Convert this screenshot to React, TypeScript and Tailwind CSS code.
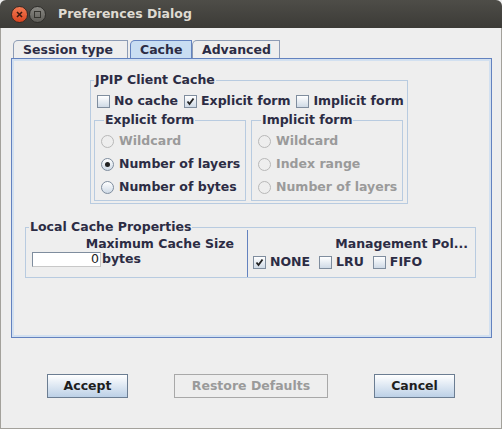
import React from 'react';

const TEXT = 'text-[#2c2c44]';
const DIM = 'text-[#9a9a9a]';

const CheckBox: React.FC<{ checked?: boolean; label: string; className?: string }> = ({ checked, label, className }) => (
  <div className={`flex items-center gap-[4px] ${className ?? ''}`}>
    <div className="w-[13px] h-[13px] border border-[#7f8d9e] bg-gradient-to-b from-[#ffffff] to-[#cfdae6] flex items-center justify-center">
      {checked && (
        <svg width="9" height="9" viewBox="0 0 9 9">
          <path d="M1.5 4.5 L3.5 7 L7.5 1.5" stroke="#222" strokeWidth="1.8" fill="none" />
        </svg>
      )}
    </div>
    <span className={TEXT}>{label}</span>
  </div>
);

const Radio: React.FC<{ checked?: boolean; disabled?: boolean; label: string }> = ({ checked, disabled, label }) => (
  <div className="flex items-center gap-[5px] h-[23px]">
    <div
      className={`w-[13px] h-[13px] rounded-full border flex items-center justify-center ${
        disabled ? 'border-[#b8b8b8] bg-[#eeeeee]' : 'border-[#7f8d9e] bg-gradient-to-b from-[#ffffff] to-[#cfdae6]'
      }`}
    >
      {checked && <div className="w-[5px] h-[5px] rounded-full bg-[#222]" />}
    </div>
    <span className={disabled ? DIM : TEXT}>{label}</span>
  </div>
);

const Group: React.FC<{ title: string; className?: string; children: React.ReactNode }> = ({ title, className, children }) => (
  <fieldset className={`border border-[#b8cbe0] ${className ?? ''}`}>
    <legend className={`ml-[3px] px-[1px] leading-[16px] ${TEXT}`}>{title}</legend>
    {children}
  </fieldset>
);

const Tab: React.FC<{ label: string; selected?: boolean; width: string }> = ({ label, selected, width }) => (
  <div
    className={`${width} h-[18px] rounded-tl-[5px] border border-b-0 flex items-center pl-[9px] pt-[1px] ${
      selected ? 'bg-[#c8ddf2] border-[#6382bf]' : 'bg-[#eeeeee] border-[#8d9cb5]'
    }`}
  >
    <span className={TEXT}>{label}</span>
  </div>
);

const Button: React.FC<{ label: string; width: string; disabled?: boolean }> = ({ label, width, disabled }) => (
  <div
    className={`${width} h-[24px] border flex items-center justify-center ${
      disabled
        ? 'border-[#a8a8a8] bg-[#eeeeee] text-[#9a9a9a]'
        : 'border-[#6b7d92] bg-gradient-to-b from-[#ffffff] to-[#bcd0e6] text-[#1e1e1e]'
    }`}
  >
    {label}
  </div>
);

export default function App() {
  return (
    <div
      className="w-[502px] h-[429px] flex flex-col bg-[#eeeeee] text-[12.5px] font-bold"
      style={{ fontFamily: '"DejaVu Sans", sans-serif' }}
    >
      {/* title bar */}
      <div className="h-[28px] rounded-t-[6px] bg-gradient-to-b from-[#4e4d48] to-[#3c3b37] flex items-center pl-[11px] shrink-0">
        <div className="w-[17px] h-[17px] rounded-full bg-gradient-to-b from-[#f37a52] to-[#d9431e] border border-[#3a2a24] flex items-center justify-center">
          <svg width="7" height="7" viewBox="0 0 7 7">
            <path d="M1 1 L6 6 M6 1 L1 6" stroke="#3b1a10" strokeWidth="1.6" />
          </svg>
        </div>
        <div className="ml-[1px] w-[17px] h-[17px] rounded-full bg-gradient-to-b from-[#8a8984] to-[#5f5e59] border border-[#2f2e2b] flex items-center justify-center">
          <div className="w-[7px] h-[7px] border-[1.5px] border-[#35342f]" />
        </div>
        <span className="ml-[12px] text-[#dfdbd2] text-[12.5px]">Preferences Dialog</span>
      </div>

      {/* body */}
      <div className="flex-1 flex flex-col border-x border-b border-[#a3a19b] pl-[10px] pr-[9px] pt-[12px]">
        {/* tabs */}
        <div className="flex items-end pl-[2px] gap-[2px]">
          <Tab label="Session type" width="w-[115px]" />
          <div className="flex">
            <Tab label="Cache" selected width="w-[62px]" />
            <Tab label="Advanced" width="w-[88px]" />
          </div>
        </div>

        {/* tab panel */}
        <div className="h-[280px] border border-[#6382bf]">
          <div className="h-full border-2 border-[#d2e0f0] flex flex-col">
            <Group title="JPIP Client Cache" className="ml-[76px] mt-[11px] w-[318px] pb-[2px]">
              <div className="flex items-center h-[22px] pl-[6px] mt-[2px]">
                <CheckBox label="No cache" />
                <CheckBox label="Explicit form" checked className="ml-[6px]" />
                <CheckBox label="Implicit form" className="ml-[6px]" />
              </div>
              <div className="flex pl-[3px] gap-[5px]">
                <Group title="Explicit form" className="w-[152px] pl-[6px] pt-[2px] pb-[1px]">
                  <Radio label="Wildcard" disabled />
                  <Radio label="Number of layers" checked />
                  <Radio label="Number of bytes" />
                </Group>
                <Group title="Implicit form" className="w-[152px] pl-[6px] pt-[2px] pb-[1px]">
                  <Radio label="Wildcard" disabled />
                  <Radio label="Index range" disabled />
                  <Radio label="Number of layers" disabled />
                </Group>
              </div>
            </Group>

            <Group title="Local Cache Properties" className="ml-[11px] mt-[15px] w-[451px]">
              <div className="flex h-[42px] pt-[1px]">
                <div className="w-[221px] flex flex-col">
                  <div className={`text-right pr-[13px] leading-[15px] ${TEXT}`}>Maximum Cache Size</div>
                  <div className="flex items-center mt-[-1px] pl-[6px]">
                    <div className="w-[69px] h-[15px] bg-white border border-[#7f8d9e] border-r-[#c8c8c8] border-b-[#c8c8c8] flex items-center justify-end pr-[1px] font-normal text-[#222] leading-none">
                      0
                    </div>
                    <span className={`ml-[1px] ${TEXT}`}>bytes</span>
                  </div>
                </div>
                <div className="w-[1px] bg-[#6382bf] mt-[-6px]" />
                <div className="flex-1 flex flex-col">
                  <div className={`text-right pr-[7px] leading-[15px] ${TEXT}`}>Management Pol...</div>
                  <div className="flex items-center mt-[2px] pl-[5px]">
                    <CheckBox label="NONE" checked />
                    <CheckBox label="LRU" className="ml-[9px]" />
                    <CheckBox label="FIFO" className="ml-[9px]" />
                  </div>
                </div>
              </div>
            </Group>
          </div>
        </div>

        {/* buttons */}
        <div className="flex mt-[36px] pl-[36px]">
          <Button label="Accept" width="w-[81px]" />
          <Button label="Restore Defaults" width="w-[154px] ml-[46px]" disabled />
          <Button label="Cancel" width="w-[81px] ml-[46px]" />
        </div>
      </div>
    </div>
  );
}
